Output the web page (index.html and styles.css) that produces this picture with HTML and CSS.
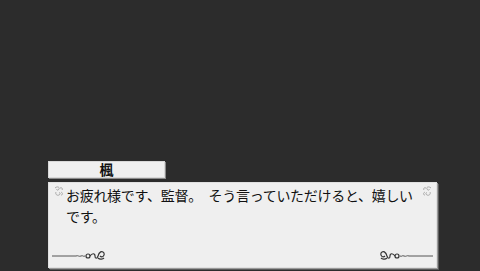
FILE: index.html
```html
<!DOCTYPE html>
<html lang="ja">
<head>
    <meta charset="UTF-8">
    <title>Message</title>
    <link rel="stylesheet" href="styles.css">
</head>
<body>
    <div class="scene">
        <div class="name-plate">楓</div>
        <div class="message-box">
            <svg class="corner corner-tl" width="10" height="11" viewBox="0 0 10 11">
                <path d="M1 2 C3 0 6 1 5 3 C4 5 2 4 3 3 M6 2 C8 1 9 3 8 4 M2 6 C1 8 3 10 5 9 C7 8 6 6 5 7 M7 6 C9 7 9 9 7 9" fill="none" stroke="#a8a8a8" stroke-width="1"/>
            </svg>
            <svg class="corner corner-tr" width="10" height="11" viewBox="0 0 10 11">
                <path d="M9 2 C7 0 4 1 5 3 C6 5 8 4 7 3 M4 2 C2 1 1 3 2 4 M8 6 C9 8 7 10 5 9 C3 8 4 6 5 7 M3 6 C1 7 1 9 3 9" fill="none" stroke="#a8a8a8" stroke-width="1"/>
            </svg>
            <p class="message-text">お疲れ様です、監督。　そう言っていただけると、嬉しいです。</p>
            <svg class="flourish flourish-left" width="56" height="12" viewBox="0 0 56 12">
                <path d="M0 7 L24 7 C26 6 27 8 29 7 C31 6 31 8 33 7" fill="none" stroke="#555" stroke-width="1"/>
                <circle cx="36" cy="7" r="2" fill="none" stroke="#333" stroke-width="1.2"/>
                <path d="M38 7 C40 4 43 4 43 7 C43 10 45 10 46 7 C47 3 50 1 52 4 C53 7 50 9 48 7 M46 9 C48 11 51 10 52 9" fill="none" stroke="#333" stroke-width="1.2"/>
            </svg>
            <svg class="flourish flourish-right" width="56" height="12" viewBox="0 0 56 12">
                <path d="M56 7 L32 7 C30 6 29 8 27 7 C25 6 25 8 23 7" fill="none" stroke="#555" stroke-width="1"/>
                <circle cx="20" cy="7" r="2" fill="none" stroke="#333" stroke-width="1.2"/>
                <path d="M18 7 C16 4 13 4 13 7 C13 10 11 10 10 7 C9 3 6 1 4 4 C3 7 6 9 8 7 M10 9 C8 11 5 10 4 9" fill="none" stroke="#333" stroke-width="1.2"/>
            </svg>
        </div>
    </div>
</body>
</html>
```

FILE: styles.css
```css
body {
    margin: 0;
    height: 271px;
    background-color: #2c2c2c;
    font-family: "Noto Sans CJK JP", "Noto Sans", sans-serif;
    overflow: hidden;
}
.scene {
    display: flex;
    flex-direction: column;
    justify-content: flex-end;
    height: 100%;
    padding: 0 43px 3px 48px;
    box-sizing: border-box;
}
.name-plate {
    width: 117px;
    height: 17px;
    margin-bottom: 4px;
    background-color: #efefef;
    border: 1px solid #d8d8d8;
    box-sizing: border-box;
    box-shadow: 1px 1px 0 #8a8a8a;
    color: #111;
    font-size: 14px;
    font-weight: bold;
    line-height: 15px;
    text-align: center;
}
.message-box {
    position: relative;
    height: 86px;
    background-color: #efefef;
    border: 1px solid #e0e0e0;
    box-sizing: border-box;
    box-shadow: 1px 1px 0 #9a9a9a, 2px 2px 0 #5a5a5a;
    padding: 2px 20px 0 17px;
}
.message-text {
    margin: 0;
    color: #111;
    font-size: 14px;
    line-height: 21px;
    letter-spacing: -0.3px;
}
.corner {
    position: absolute;
    top: 3px;
}
.corner-tl {
    left: 5px;
}
.corner-tr {
    right: 4px;
}
.flourish {
    position: absolute;
    bottom: 6px;
}
.flourish-left {
    left: 3px;
}
.flourish-right {
    right: 3px;
}
```
